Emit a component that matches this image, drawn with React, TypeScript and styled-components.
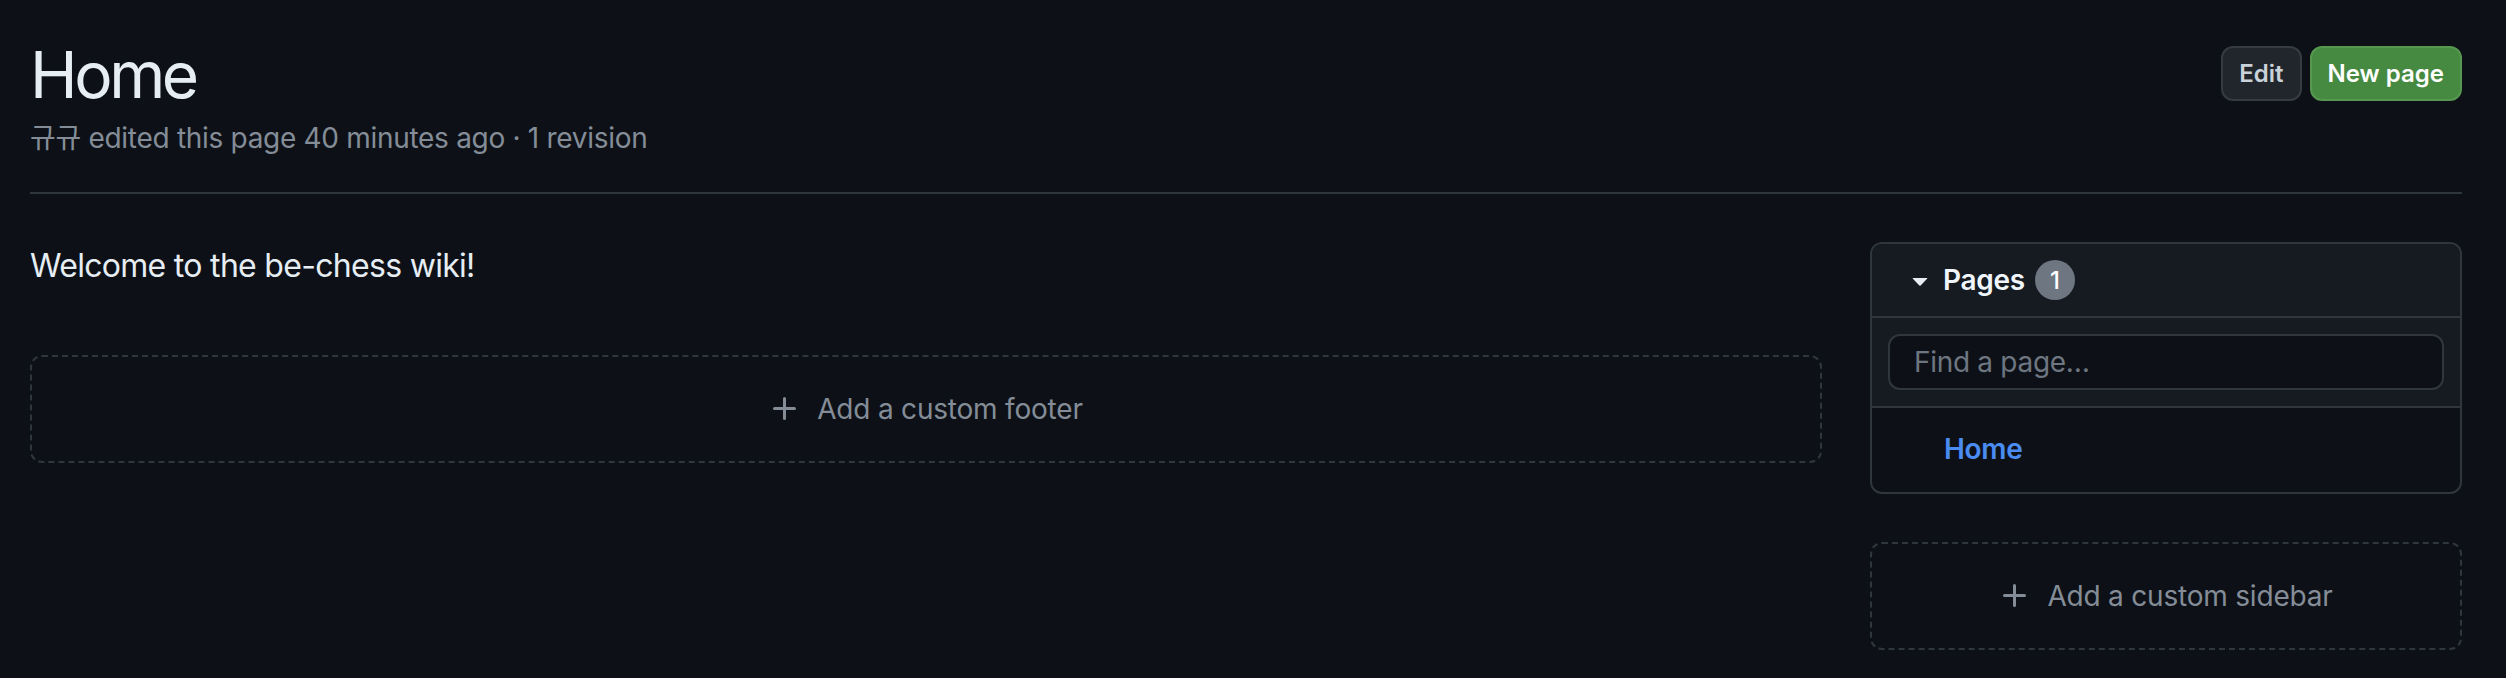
import styled, { createGlobalStyle } from 'styled-components';

const GlobalStyle = createGlobalStyle`
  body {
    margin: 0;
    background: #0d1117;
    font-family: Inter, "Noto Sans", "Noto Sans CJK KR", sans-serif;
    color: #e6edf3;
  }
`;

// Page wrapper
const Page = styled.div`
  padding: 35px 44px 0 30px;
`;

const Header = styled.div`
  display: flex;
  justify-content: space-between;
  align-items: flex-start;
`;

const Title = styled.h1`
  margin: 0;
  font-size: 64px;
  line-height: 80px;
  font-weight: 400;
  letter-spacing: -3.4px;
  color: #e6edf3;
`;

const Meta = styled.div`
  margin-top: 2px;
  font-size: 28px;
  line-height: 42px;
  letter-spacing: -0.3px;
  color: #848d97;
`;

const Actions = styled.div`
  display: flex;
  gap: 8px;
  margin-top: 11px;
`;

const Button = styled.button<{ $primary?: boolean }>`
  height: 55px;
  padding: 0 16px;
  border-radius: 12px;
  border: 2px solid ${({ $primary }) => ($primary ? '#56984f' : '#363b42')};
  background: ${({ $primary }) => ($primary ? '#468a41' : '#21262d')};
  color: ${({ $primary }) => ($primary ? '#ffffff' : '#c9d1d9')};
  font-family: inherit;
  font-size: 24px;
  font-weight: 600;
  cursor: pointer;
`;

const Rule = styled.hr`
  margin: 33px 0 48px;
  border: 0;
  border-top: 2px solid #30363d;
`;

// Main layout: content + sidebar
const Layout = styled.div`
  display: flex;
  gap: 48px;
  align-items: flex-start;
`;

const Main = styled.div`
  flex: 1;
  min-width: 0;
`;

const Body = styled.p`
  margin: 0;
  font-size: 32px;
  line-height: 48px;
  letter-spacing: -0.7px;
  color: #e6edf3;
`;

const AddBox = styled.div<{ $offset: number }>`
  margin-top: ${({ $offset }) => $offset}px;
  height: 108px;
  box-sizing: border-box;
  border: 2px dashed #30363d;
  border-radius: 12px;
  display: flex;
  align-items: center;
  justify-content: center;
  gap: 16px;
  color: #848d97;
  font-size: 28px;
  letter-spacing: -0.2px;
  cursor: pointer;
`;

const Sidebar = styled.aside`
  width: 592px;
  flex-shrink: 0;
`;

const PagesBox = styled.div`
  border: 2px solid #30363d;
  border-radius: 12px;
  overflow: hidden;
`;

const PagesHeader = styled.div`
  height: 72px;
  padding-left: 32px;
  display: flex;
  align-items: center;
  background: #161b22;
  border-bottom: 2px solid #30363d;
`;

const PagesTitle = styled.span`
  margin-left: 7px;
  font-size: 28px;
  font-weight: 600;
  letter-spacing: -0.3px;
  color: #f0f6fc;
`;

const Counter = styled.span`
  margin-left: 10px;
  min-width: 40px;
  height: 40px;
  border-radius: 20px;
  background: #6e7681;
  color: #ffffff;
  font-size: 24px;
  font-weight: 500;
  display: inline-flex;
  align-items: center;
  justify-content: center;
`;

const SearchRow = styled.div`
  padding: 16px;
  background: #161b22;
  border-bottom: 2px solid #30363d;
`;

const SearchInput = styled.input`
  width: 100%;
  height: 56px;
  box-sizing: border-box;
  padding: 0 24px;
  border: 2px solid #30363d;
  border-radius: 12px;
  background: #0d1117;
  color: #e6edf3;
  font-family: inherit;
  font-size: 28px;
  letter-spacing: -0.3px;
  outline: none;

  &::placeholder {
    color: #6e7681;
  }
`;

const PageList = styled.ul`
  list-style: none;
  margin: 0;
  padding: 20px 0 18px 72px;
  line-height: 42px;
`;

const PageLink = styled.a`
  font-size: 28px;
  line-height: 42px;
  font-weight: 600;
  letter-spacing: -0.3px;
  color: #4a8cf2;
  text-decoration: none;
`;

const PlusIcon = () => (
  <svg width="32" height="32" viewBox="0 0 16 16" fill="currentColor">
    <path d="M7.75 2a.75.75 0 0 1 .75.75V7h4.25a.75.75 0 0 1 0 1.5H8.5v4.25a.75.75 0 0 1-1.5 0V8.5H2.75a.75.75 0 0 1 0-1.5H7V2.75A.75.75 0 0 1 7.75 2Z" />
  </svg>
);

const TriangleDown = () => (
  <svg width="32" height="32" viewBox="0 0 16 16" fill="#e6edf3">
    <path d="m4.427 7.427 3.396 3.396a.25.25 0 0 0 .354 0l3.396-3.396A.25.25 0 0 0 11.396 7H4.604a.25.25 0 0 0-.177.427Z" />
  </svg>
);

const App = () => {
  return (
    <>
      <GlobalStyle />
      <Page>
        <Header>
          <div>
            <Title>Home</Title>
            <Meta>규규 edited this page 40 minutes ago · 1 revision</Meta>
          </div>
          <Actions>
            <Button>Edit</Button>
            <Button $primary>New page</Button>
          </Actions>
        </Header>

        <Rule />

        <Layout>
          <Main>
            <Body>Welcome to the be-chess wiki!</Body>
            <AddBox $offset={65}>
              <PlusIcon />
              <span>Add a custom footer</span>
            </AddBox>
          </Main>

          <Sidebar>
            <PagesBox>
              <PagesHeader>
                <TriangleDown />
                <PagesTitle>Pages</PagesTitle>
                <Counter>1</Counter>
              </PagesHeader>
              <SearchRow>
                <SearchInput placeholder="Find a page…" />
              </SearchRow>
              <PageList>
                <li>
                  <PageLink href="#">Home</PageLink>
                </li>
              </PageList>
            </PagesBox>
            <AddBox $offset={48}>
              <PlusIcon />
              <span>Add a custom sidebar</span>
            </AddBox>
          </Sidebar>
        </Layout>
      </Page>
    </>
  );
};

export default App;
